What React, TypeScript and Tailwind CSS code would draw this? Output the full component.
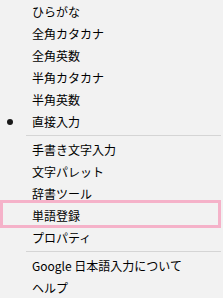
import React from 'react';

type Item =
  | { type: 'item'; label: string; checked?: boolean; highlight?: boolean }
  | { type: 'sep' };

const items: Item[] = [
  { type: 'item', label: 'ひらがな' },
  { type: 'item', label: '全角カタカナ' },
  { type: 'item', label: '全角英数' },
  { type: 'item', label: '半角カタカナ' },
  { type: 'item', label: '半角英数' },
  { type: 'item', label: '直接入力', checked: true },
  { type: 'sep' },
  { type: 'item', label: '手書き文字入力' },
  { type: 'item', label: '文字パレット' },
  { type: 'item', label: '辞書ツール' },
  { type: 'item', label: '単語登録', highlight: true },
  { type: 'item', label: 'プロパティ' },
  { type: 'sep' },
  { type: 'item', label: 'Google 日本語入力について' },
  { type: 'item', label: 'ヘルプ' },
];

export default function App() {
  return (
    <div
      className="w-[223px] h-[298px] overflow-hidden bg-[#f2f2f2] pt-px text-[12px] text-black"
      style={{ fontFamily: '"Noto Sans CJK JP", "Liberation Sans", sans-serif' }}
    >
      {items.map((it, i) =>
        it.type === 'sep' ? (
          <div key={i} className="h-[6px] pt-[2px] pl-[26px] pr-[2px]">
            <div className="h-px bg-[#d5d5d5]" />
          </div>
        ) : (
          <div key={i} className="relative flex h-[22px] items-center">
            <div className="flex w-[32px] shrink-0 items-center pl-[7px]">
              {it.checked && <span className="block h-[6px] w-[6px] rounded-full bg-[#1a1a1a]" />}
            </div>
            <span className="whitespace-nowrap leading-none">{it.label}</span>
            {it.highlight && (
              <div className="pointer-events-none absolute left-0 right-[2px] top-[-5px] bottom-[-1px] border-[3px] border-[#f5b2c9]" />
            )}
          </div>
        )
      )}
    </div>
  );
}
